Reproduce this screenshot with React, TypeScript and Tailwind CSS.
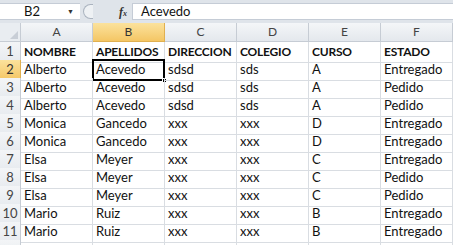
import React from 'react'

const cols = ['A', 'B', 'C', 'D', 'E', 'F']

const rows: string[][] = [
  ['NOMBRE', 'APELLIDOS', 'DIRECCION', 'COLEGIO', 'CURSO', 'ESTADO'],
  ['Alberto', 'Acevedo', 'sdsd', 'sds', 'A', 'Entregado'],
  ['Alberto', 'Acevedo', 'sdsd', 'sds', 'A', 'Pedido'],
  ['Alberto', 'Acevedo', 'sdsd', 'sds', 'A', 'Pedido'],
  ['Monica', 'Gancedo', 'xxx', 'xxx', 'D', 'Entregado'],
  ['Monica', 'Gancedo', 'xxx', 'xxx', 'D', 'Entregado'],
  ['Elsa', 'Meyer', 'xxx', 'xxx', 'C', 'Entregado'],
  ['Elsa', 'Meyer', 'xxx', 'xxx', 'C', 'Pedido'],
  ['Elsa', 'Meyer', 'xxx', 'xxx', 'C', 'Pedido'],
  ['Mario', 'Ruiz', 'xxx', 'xxx', 'B', 'Entregado'],
  ['Mario', 'Ruiz', 'xxx', 'xxx', 'B', 'Entregado'],
  ['', '', '', '', '', ''],
]

const gridCols = 'grid grid-cols-[21px_repeat(6,72px)]'

const App: React.FC = () => {
  return (
    <div
      className="w-[453px] h-[245px] overflow-hidden bg-[#dfe4ea] text-[13px] text-[#111]"
      style={{ fontFamily: 'Lato, "Liberation Sans", sans-serif' }}
    >
      {/* formula bar */}
      <div className="flex h-[17px] mt-[3px] items-stretch">
        <div className="w-[80px] bg-white border-y border-[#c5ccd6] flex items-center pl-[24px] pr-[6px] justify-between">
          <span className="text-[13px]">B2</span>
          <span className="text-[7px] text-[#333]">▼</span>
        </div>
        <div className="w-[52px] flex items-center relative">
          <div className="ml-[3px] w-[10px] h-[15px] rounded-l-full border border-r-0 border-[#aab3bf] bg-[#eef1f4]" />
          <span
            className="absolute left-[39px] top-0 text-[12px] italic font-bold text-[#333]"
            style={{ fontFamily: '"Liberation Serif", serif' }}
          >
            f<span className="text-[8px]">x</span>
          </span>
        </div>
        <div className="flex-1 bg-white border-y border-l border-[#c5ccd6] flex items-center pl-[8px]">
          Acevedo
        </div>
      </div>

      {/* sheet */}
      <div className="mt-[3px] bg-white">
        <div className={`${gridCols} h-[19px]`}>
          <div className="bg-[#e9edf1] border-r border-b border-[#c6ccd4] relative">
            <div className="absolute right-[2px] bottom-[2px] w-0 h-0 border-l-[8px] border-l-transparent border-b-[8px] border-b-[#c8ced6]" />
          </div>
          {cols.map((c) => (
            <div
              key={c}
              className={`flex items-center justify-center border-r border-b text-[12px] ${
                c === 'B'
                  ? 'bg-gradient-to-b from-[#fbe29c] to-[#f4c664] border-[#e0b050] text-[#333]'
                  : 'bg-gradient-to-b from-[#f4f6f8] to-[#e4e8ed] border-[#c6ccd4] text-[#444]'
              }`}
            >
              {c}
            </div>
          ))}
        </div>
        {rows.map((r, i) => (
          <div key={i} className={`${gridCols} h-[18px]`}>
            <div
              className={`flex items-center justify-center border-r border-b text-[13px] ${
                i === 1
                  ? 'bg-gradient-to-b from-[#fbe29c] to-[#f4c664] border-[#e0b050] text-[#333]'
                  : 'bg-gradient-to-b from-[#f3f5f7] to-[#e7ebef] border-[#c6ccd4] text-[#444]'
              }`}
            >
              {i < 11 ? i + 1 : ''}
            </div>
            {r.map((v, j) => {
              const selected = i === 1 && j === 1
              return (
                <div
                  key={j}
                  className={`relative flex items-center pl-[3px] border-r border-b border-[#d9dde2] whitespace-nowrap overflow-visible ${
                    i === 0 ? 'font-bold text-[12px] tracking-[-0.2px]' : ''
                  }`}
                >
                  {selected && (
                    <>
                      <div className="absolute -left-px -top-px -right-px -bottom-px border-2 border-black" />
                      <div className="absolute -right-[3px] -bottom-[3px] w-[5px] h-[5px] bg-black border border-white" />
                    </>
                  )}
                  <span className="relative">{v}</span>
                </div>
              )
            })}
          </div>
        ))}
      </div>
    </div>
  )
}

export default App
